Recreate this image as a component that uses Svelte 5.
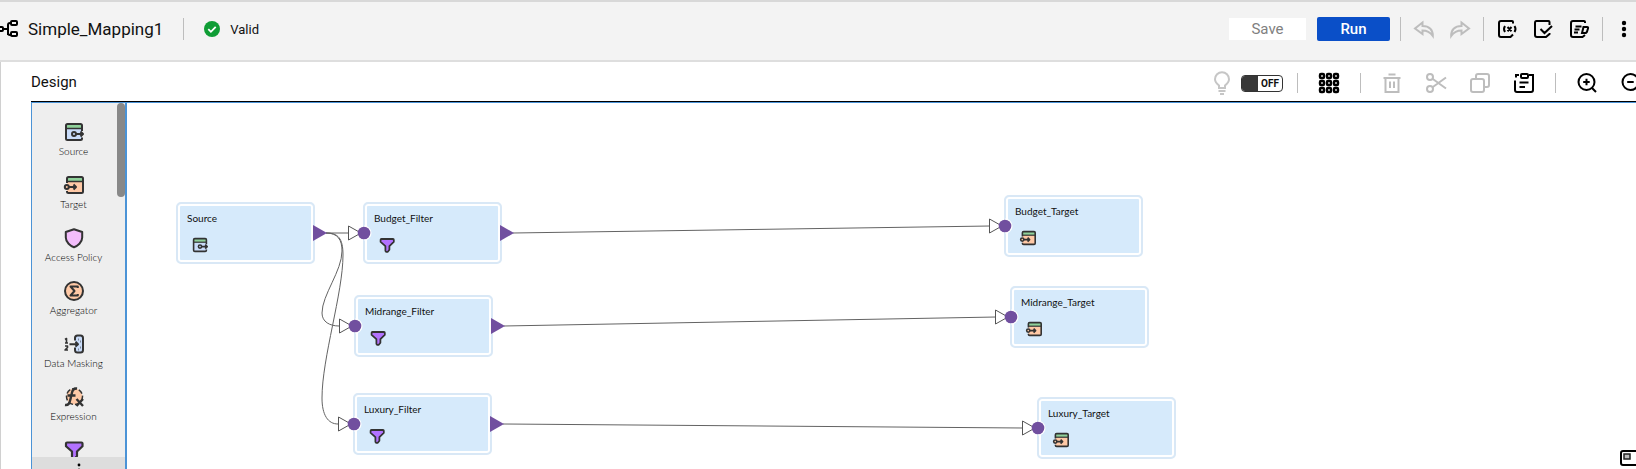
<script>
  const palette = [
    { icon: 'source', label: 'Source' },
    { icon: 'target', label: 'Target' },
    { icon: 'policy', label: 'Access Policy' },
    { icon: 'aggregator', label: 'Aggregator' },
    { icon: 'masking', label: 'Data Masking' },
    { icon: 'expression', label: 'Expression' },
    { icon: 'filter', label: '' }
  ];

  const nodes = [
    { name: 'Source', icon: 'source', x: 49, y: 99, input: false, output: true },
    { name: 'Budget_Filter', icon: 'filter', x: 236, y: 99, input: true, output: true },
    { name: 'Midrange_Filter', icon: 'filter', x: 227, y: 192, input: true, output: true },
    { name: 'Luxury_Filter', icon: 'filter', x: 226, y: 290, input: true, output: true },
    { name: 'Budget_Target', icon: 'target', x: 877, y: 92, input: true, output: false },
    { name: 'Midrange_Target', icon: 'target', x: 883, y: 183, input: true, output: false },
    { name: 'Luxury_Target', icon: 'target', x: 910, y: 294, input: true, output: false }
  ];

  const wires = [
    'M199 130H222',
    'M199 130C211 130 215 137 215 148C215 168 195 192 195 210C195 219 203 223 212 223',
    'M199 130C211 130 216 135 216 152C216 190 195 255 195 295C195 312 201 321 211 321',
    'M386 130L863 123',
    'M377 223L869 214',
    'M376 321L896 325'
  ];
</script>

{#snippet glyph(name)}
  <svg class="glyph" viewBox="0 0 20 20" aria-hidden="true">
    {#if name === 'source'}
      <rect x="1.5" y="2" width="16.5" height="16" rx="2" fill="#c9dcfa" stroke="none" />
      <path d="M2 2h16v4.500H2z" fill="#8fd19a" stroke="none" />
      <path d="M18 9V3.500Q18 2 16.500 2H3.500Q2 2 2 3.500V16.500Q2 18 3.500 18h13Q18 18 18 16.500V15.500" />
      <path d="M2 6.500h16" stroke-width="1.500" />
      <circle cx="10" cy="12" r="2" />
      <path d="M12 12h7M16.500 9.500 19 12l-2.500 2.500" />
    {:else if name === 'target'}
      <rect x="3" y="2" width="16" height="16" rx="2" fill="#ffc9a6" stroke="none" />
      <path d="M3 2h16v4.500H3z" fill="#8fd19a" stroke="none" />
      <path d="M3 8V3.500Q3 2 4.500 2h13Q19 2 19 3.500v13q0 1.500-1.500 1.500h-13Q3 18 3 16.500V16" />
      <path d="M3 6.500h16" stroke-width="1.500" />
      <circle cx="2.800" cy="12" r="2" fill="#ffc9a6" />
      <path d="M5 12h7M9.500 9.500 12 12l-2.500 2.500" />
    {:else if name === 'policy'}
      <path d="M10 1.200 18.200 4v5.500c0 5-4.700 8.500-8.200 9.700C6.500 18 1.800 14.500 1.800 9.500V4Z" fill="#f3bdfb" />
    {:else if name === 'aggregator'}
      <circle cx="10" cy="10" r="9" fill="#ffc9a6" />
      <path d="M13.800 7V5.500H6.500L10.500 10l-4 4.500h7.300V13" />
    {:else if name === 'masking'}
      <rect x="11" y="1.500" width="8" height="17" rx="2" fill="#c9dcfa" stroke="none" />
      <path d="M11 6.500V4q0-2.500 2.500-2.500h3Q19 1.500 19 4v12q0 2.500-2.500 2.500h-3Q11 18.500 11 16v-2.500M5.500 10.200H14M11.500 7.800l2.500 2.400-2.500 2.400" />
      <path d="M1 5.500 2.500 4.500V9M1 9h3M1 12h2.500v1.500L1 16h3" stroke-width="1.600" />
      <path d="M14.500 5.500h.5M16.500 7.500h.5M16.500 13.500h.5M14.500 15.500h.5" />
    {:else if name === 'expression'}
      <circle cx="10.500" cy="9.500" r="8" fill="#ffc9a6" stroke-width="1.500" stroke-dasharray="5 2" />
      <path d="M1 18c3.500.5 4.500-1.500 5.500-6L8 5.500C8.700 2.500 10 1 13 1.500M3.500 8.500h8M12.500 12l6.500 7M19 12l-6.500 7" stroke-width="2.400" />
    {:else if name === 'filter'}
      <path d="M3 2.500h14.500q1 0 1 1v2.700L13 11.500v4.500L11 18.500H9L8 17.500v-6L2 6.200V3.500q0-1 1-1Z" fill="#b272ff" stroke-width="2.200" />
    {/if}
  </svg>
{/snippet}

<div class="app">
  <header class="topbar">
    <svg class="mapping" viewBox="0 0 18 20" aria-hidden="true">
      <path d="M0 10h8M8 16V10.500M8 10V6q0-2 2-2h1M8 10v4q0 2 2 2h1" />
      <rect x="-3" y="8" width="6" height="4" rx="1" fill="#f3f3f3" />
      <rect x="11" y="2" width="6" height="4" rx="1" />
      <rect x="11" y="13" width="6" height="4" rx="1" />
    </svg>
    <h1>Simple_Mapping1</h1>
    <span class="divider"></span>
    <div class="status">
      <svg viewBox="0 0 16 16" aria-hidden="true">
        <circle cx="8" cy="8" r="8" fill="#0f9d35" />
        <path d="m4.300 8.200 2.600 2.600 4.800-5" fill="none" stroke="#fff" stroke-width="1.800" />
      </svg>
      <span>Valid</span>
    </div>

    <div class="actions">
      <div class="buttons">
        <button class="save" disabled>Save</button>
        <button class="run">Run</button>
      </div>
      <span class="divider"></span>
      <button class="icon faded" aria-label="Undo" disabled>
        <svg viewBox="0 0 20 20"><path d="M8.500 3.500 1 9.500l7.500 5.500v-3.500c4.500 0 7.500 1.500 10.300 5.500.2-6-3.300-10-10.300-10Z" /></svg>
      </button>
      <button class="icon faded" aria-label="Redo" disabled>
        <svg viewBox="0 0 20 20"><path d="M11.500 3.500 19 9.500 11.500 15v-3.500C7 11.500 4 13 1.200 17 1 11 4.500 7 11.500 7Z" /></svg>
      </button>
      <span class="divider"></span>
      <button class="icon" aria-label="Parameters">
        <svg viewBox="0 0 20 20">
          <path d="M16 4.500V3q0-1-1-1H4Q2 2 2 4v12q0 2 2 2h9.500l2.500-2.500" />
          <path d="M8 7q-2 3 0 6M17.500 7q2 3 0 6M10.500 8l4 4.200M14.500 8l-4 4.200" />
        </svg>
      </button>
      <button class="icon" aria-label="Validate">
        <svg viewBox="0 0 20 20">
          <path d="M16.500 6V3q0-1-1-1H3.500Q2 2 2 4v12q0 2 2 2h9l3.500-3V14M7.500 10l4 4L19 7" />
        </svg>
      </button>
      <button class="icon" aria-label="Edit details">
        <svg viewBox="0 0 20 20">
          <path d="M16 4V3q0-1-1-1H4Q2 2 2 4v12q0 2 2 2h9.500L16 16M6.500 7.500h6M5.500 10.500h5M5 13.500h4" />
          <path d="M14.500 8H18q1.500 0 1 1.500l-.8 2.500q-.4 2-2.200 2h-3Z" />
        </svg>
      </button>
      <span class="divider"></span>
      <button class="icon narrow" aria-label="More actions">
        <svg viewBox="0 0 16 20">
          <g fill="#000" stroke="none"><circle cx="8" cy="4" r="2.200" /><circle cx="8" cy="10" r="2.200" /><circle cx="8" cy="16" r="2.200" /></g>
        </svg>
      </button>
    </div>
  </header>

  <main class="panel">
    <div class="toolbar">
      <h2>Design</h2>
      <div class="tools">
        <div class="hints">
          <svg class="bulb" viewBox="0 0 20 24" aria-hidden="true">
            <path d="M7 17v-2.500C4.500 12.500 3 11 3 8.200a7 7 0 0 1 14 0c0 2.800-1.500 4.300-4 6.300V17ZM6.500 20h7M8 23h4" />
          </svg>
          <label class="toggle">
            <input type="checkbox" role="switch" aria-label="Recommendations" />
            <span>OFF</span>
          </label>
        </div>
        <span class="divider short"></span>
        <button class="icon" aria-label="Arrange all">
          <svg viewBox="0 0 20 20">
            {#each [3, 10, 17] as cy}
              {#each [3, 10, 17] as cx}
                <rect x={cx - 2} y={cy - 2} width="4" height="4" rx="1" stroke-width="2.400" />
              {/each}
            {/each}
          </svg>
        </button>
        <span class="divider short"></span>
        <button class="icon faded" aria-label="Delete" disabled>
          <svg viewBox="0 0 20 20"><path d="M6.500 1.500h7M1.500 5h17M3.500 5v14h13V5M8 8.500V15M12 8.500V15" /></svg>
        </button>
        <button class="icon faded" aria-label="Cut" disabled>
          <svg viewBox="0 0 20 20"><circle cx="4" cy="4" r="3" /><circle cx="4" cy="16" r="3" /><path d="M6.500 5.800 20 15.500M6.500 14.200 20 4.500" /></svg>
        </button>
        <button class="icon faded" aria-label="Copy" disabled>
          <svg viewBox="0 0 20 20"><rect x="1" y="6" width="13" height="13" rx="2" /><path d="M6 6V3q0-2 2-2h9q2 0 2 2v9q0 2-2 2h-3" /></svg>
        </button>
        <button class="icon" aria-label="Paste">
          <svg viewBox="0 0 20 20"><path d="M5 2H2v2.500M15 2h4v15q0 2-2 2H3q-2 0-2-2V7.500M5.500 9.500h9M5.500 14H11" /><rect x="7" y="1" width="7" height="4" rx="1" /></svg>
        </button>
        <span class="divider short"></span>
        <button class="icon" aria-label="Zoom in">
          <svg viewBox="0 0 20 20"><circle cx="9.500" cy="9" r="8" /><path d="M15 15l4 4M9.500 5.800v6.500M6.200 9h6.500" /></svg>
        </button>
        <button class="icon" aria-label="Zoom out">
          <svg viewBox="0 0 20 20"><circle cx="9.500" cy="9" r="8" /><path d="M15 15l4 4M6.200 9h6.500" /></svg>
        </button>
      </div>
    </div>

    <div class="workspace">
      <aside class="palette">
        <ul>
          {#each palette as item}
            <li>
              {@render glyph(item.icon)}
              {#if item.label}<span>{item.label}</span>{/if}
            </li>
          {/each}
        </ul>
        <div class="thumb"></div>
        <button class="grip" aria-label="Resize palette">
          <svg viewBox="0 0 4 12"><circle cx="2" cy="2" r="1.400" /><circle cx="2" cy="7" r="1.400" /></svg>
        </button>
      </aside>

      <section class="canvas" aria-label="Mapping canvas">
        {#each nodes as node}
          <article class="node" style="left: {node.x}px; top: {node.y}px">
            <h3>{node.name}</h3>
            {@render glyph(node.icon)}
          </article>
        {/each}
        <svg class="wires" aria-hidden="true">
          {#each wires as d}
            <path {d} fill="none" stroke="#636363" />
          {/each}
          {#each nodes as node}
            <g transform="translate({node.x} {node.y + 31})">
              {#if node.input}
                <path d="M-14.500-7v14L-2 0Z" fill="#fff" stroke="#555" />
                <path d="M1-7.500a7.500 7.500 0 0 1 0 15Z" fill="#fff" />
                <circle cx="1" cy="0" r="6.300" fill="#714f9f" />
              {/if}
              {#if node.output}
                <path d="M137-8v16L151 0Z" fill="#714f9f" />
                <path d="M136.500-8v16" stroke="#fff" />
              {/if}
            </g>
          {/each}
        </svg>
        <button class="overview" aria-label="Overview">
          <svg viewBox="0 0 20 16"><rect x="1" y="1" width="18" height="14" rx="2" fill="none" stroke="#000" stroke-width="2" /><rect x="4" y="4" width="6" height="5" fill="#bbb" stroke="#222" stroke-width="1.500" /></svg>
        </button>
      </section>
    </div>
  </main>
</div>

<style>
  :global(body) {
    overflow: hidden;
    background: #f3f3f3;
  }
  .app {
    display: flex;
    flex-direction: column;
    height: 100vh;
    overflow: hidden;
    box-sizing: border-box;
    border-top: 2px solid #d8d8d8;
    color: #111;
    font-family: Roboto, sans-serif;
  }
  h1, h2, h3, ul {
    margin: 0;
    padding: 0;
    font-weight: 400;
  }
  button {
    padding: 0;
    border: 0;
    background: none;
    font: inherit;
  }
  svg {
    display: block;
  }
  .topbar {
    display: flex;
    align-items: center;
    flex: none;
    height: 54px;
    padding: 0 4px 4px 0;
    border-bottom: 2px solid #dedede;
  }
  .mapping {
    width: 18px;
    height: 20px;
    margin-right: 10px;
    fill: none;
    stroke: #000;
    stroke-width: 2;
  }
  h1 {
    font-size: 17px;
    line-height: 24px;
  }
  .divider {
    flex: none;
    width: 1px;
    height: 24px;
    margin: 0 -3px;
    background: #bdbdbd;
  }
  .divider.short {
    height: 20px;
  }
  h1 + .divider {
    height: 22px;
    margin: 0 20px;
  }
  .status {
    display: flex;
    align-items: center;
    gap: 10px;
    font-size: 13px;
  }
  .status svg {
    width: 16px;
    height: 16px;
  }
  .actions {
    display: flex;
    align-items: center;
    gap: 16px;
    margin-left: auto;
  }
  .buttons {
    display: flex;
    align-items: center;
    gap: 11px;
    margin-right: -3px;
  }
  .save, .run {
    height: 24px;
    font-size: 15px;
  }
  .save {
    width: 77px;
    height: 22px;
    background: #fff;
    color: #808080;
  }
  .run {
    width: 73px;
    border-radius: 2px;
    background: #0a4fc8;
    color: #fff;
    font-weight: 500;
  }
  .icon {
    flex: none;
    width: 20px;
    height: 20px;
    color: #000;
  }
  .icon.narrow {
    width: 16px;
  }
  .icon.faded {
    color: #bdbdbd;
  }
  .icon svg {
    width: 100%;
    height: 100%;
    overflow: visible;
    fill: none;
    stroke: currentColor;
    stroke-width: 2;
  }
  .panel {
    display: flex;
    flex: 1;
    flex-direction: column;
    min-height: 0;
    padding-left: 30px;
    border-left: 1px solid #d0d0d0;
    background: #fff;
  }
  .toolbar {
    display: flex;
    align-items: center;
    justify-content: space-between;
    flex: none;
    height: 39px;
    border-bottom: 1px solid #000;
  }
  h2 {
    font-size: 15px;
    line-height: 20px;
  }
  .tools {
    display: flex;
    align-items: center;
    gap: 24px;
    margin-right: -5px;
    padding-top: 2px;
  }
  .hints {
    display: flex;
    align-items: center;
    gap: 9px;
    margin-right: -7px;
  }
  .bulb {
    width: 20px;
    height: 24px;
    fill: none;
    stroke: #c6c6c6;
    stroke-width: 2;
  }
  .toggle {
    display: flex;
    align-items: center;
    box-sizing: border-box;
    width: 42px;
    height: 17px;
    margin-top: 2px;
    overflow: hidden;
    border: 1px solid #333;
    border-radius: 4px;
    font-size: 10px;
    font-weight: 700;
  }
  .toggle input {
    flex: none;
    width: 16px;
    height: 100%;
    margin: 0;
    appearance: none;
    background: #383838;
  }
  .toggle span {
    flex: 1;
    text-align: center;
  }
  .workspace {
    display: flex;
    flex: 1;
    min-height: 0;
    border-top: 1px solid #4b93d6;
  }
  .palette {
    position: relative;
    flex: none;
    box-sizing: border-box;
    width: 96px;
    overflow: hidden;
    border-left: 1px solid #4b93d6;
    border-right: 2px solid #4b93d6;
    background: #eee;
    color: #000;
    font-family: Lato, sans-serif;
  }
  ul {
    display: flex;
    flex-direction: column;
    gap: 16px;
    padding: 19px 10px 0 0;
    list-style: none;
  }
  li {
    display: flex;
    flex-direction: column;
    align-items: center;
    gap: 2px;
    font-size: 10px;
    font-weight: 300;
    line-height: 15px;
    white-space: nowrap;
  }
  .glyph {
    width: 20px;
    height: 20px;
    overflow: visible;
    fill: none;
    stroke: #333;
    stroke-width: 2;
    stroke-linejoin: round;
  }
  .thumb {
    position: absolute;
    top: 0;
    right: 0;
    width: 8px;
    height: 94px;
    border-radius: 4px;
    background: #888;
  }
  .grip {
    position: absolute;
    right: 0;
    bottom: 0;
    left: 0;
    display: flex;
    justify-content: center;
    height: 12px;
    padding-top: 6px;
    box-sizing: border-box;
    overflow: hidden;
    background: #ddd;
  }
  .grip svg {
    flex: none;
    width: 4px;
    height: 12px;
  }
  .canvas {
    position: relative;
    flex: 1;
    min-width: 0;
    overflow: hidden;
  }
  .wires {
    position: absolute;
    inset: 0;
    width: 100%;
    height: 100%;
    pointer-events: none;
  }
  .node {
    position: absolute;
    box-sizing: border-box;
    width: 139px;
    height: 62px;
    padding: 6px 7px;
    border: 2px solid #d9e8f6;
    border-radius: 5px;
    background: #d6eafb;
    box-shadow: inset 0 0 0 2px #fff;
  }
  .node h3 {
    padding-left: 2px;
    font-family: Lato, sans-serif;
    font-size: 10px;
    line-height: 16px;
  }
  .node .glyph {
    width: 16px;
    height: 16px;
    margin: 11px 0 0 7px;
  }
  .overview {
    position: absolute;
    right: -4px;
    bottom: 3px;
  }
  .overview svg {
    width: 20px;
    height: 16px;
  }
</style>
